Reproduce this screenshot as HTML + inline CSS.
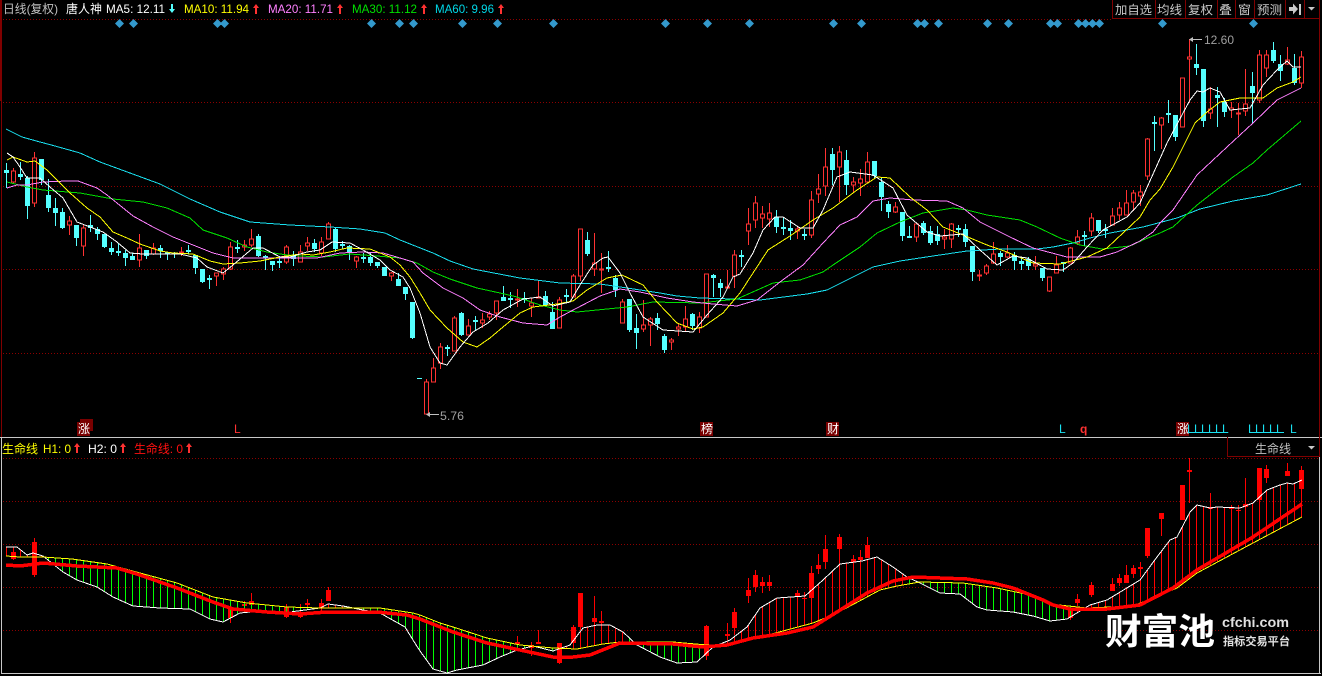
<!DOCTYPE html>
<html lang="zh"><head><meta charset="utf-8"><title>唐人神 日线</title>
<style>html,body{margin:0;padding:0;background:#000;width:1322px;height:676px;overflow:hidden}svg{display:block;position:absolute;left:0;top:0}text{font-family:"Liberation Sans","Noto Sans CJK SC",sans-serif;font-size:12px}</style>
</head><body>
<svg width="1322" height="676" viewBox="0 0 1322 676" xmlns="http://www.w3.org/2000/svg">
<defs>
<pattern id="pg" x="6" y="0" width="7" height="10" patternUnits="userSpaceOnUse"><rect width="1" height="10" fill="#00ff00"/></pattern>
<pattern id="pr" x="6" y="0" width="7" height="10" patternUnits="userSpaceOnUse"><rect width="1" height="10" fill="#ff0000"/></pattern>
<clipPath id="band"><polygon clip-rule="evenodd" points="6,547 17,547 27,555 33,553 43,556 63,572 77,580 97,587 113,597 133,606 160,608 190,609 210,619 223,622 240,613 260,611 290,612 320,608 328,604 343,606 363,610 380,613 405,627 413,640 420,651 433,669 447,673 457,670 483,665 500,657 517,650 533,646 553,651 570,645 583,628 597,625 610,625 623,632 637,645 660,657 677,663 697,662 713,647 730,640 747,627 760,608 777,598 805,596 823,580 840,564 862,561 877,557 893,567 907,577 920,583 940,593 960,594 977,607 987,610 1013,612 1033,616 1050,621 1067,619 1090,605 1107,600 1140,580 1157,557 1170,540 1177,537 1190,512 1197,505 1210,508 1217,507 1240,508 1253,503 1267,490 1280,485 1287,483 1293,484 1302,480 1302,517 1253,543 1197,573 1177,588 1133,606 1087,608 1050,604 1030,595 997,588 963,583 920,582 897,586 880,590 837,613 813,623 753,639 727,645 707,645 673,642 620,642 603,644 577,649 553,648 520,645 487,638 453,627 440,623 420,615 413,613 380,608 320,608 287,607 247,603 213,597 177,583 140,573 107,564 72,559 43,557 20,557 6,556"/></clipPath>
</defs>
<rect width="1322" height="676" fill="#000"/>

<!-- grid -->
<g stroke="#8c0000" stroke-width="1" stroke-dasharray="1 2" shape-rendering="crispEdges" fill="none">
<path d="M3 19.5H1112M3 102.5H1319M3 186.5H1319M3 269.5H1319M3 353.5H1319"/>
<path d="M3 458.5H1319M3 501.5H1319M3 544.5H1319M3 587.5H1319M3 630.5H1319"/>
</g>

<!-- frame -->
<g shape-rendering="crispEdges">
<rect x="0" y="0" width="2" height="101" fill="#800000"/>
<rect x="1" y="101" width="1" height="336" fill="#800000"/>
<rect x="1319" y="0" width="1" height="437" fill="#800000"/>
<rect x="0" y="437" width="1322" height="1" fill="#c8c8c8"/>
<rect x="1" y="437" width="1" height="237" fill="#c8c8c8"/>
<rect x="1" y="673" width="1320" height="1" fill="#c8c8c8"/>
<rect x="1319" y="456" width="1" height="218" fill="#c8c8c8"/>
</g>

<!-- main panel candles -->
<g shape-rendering="crispEdges" fill="none">
<path stroke="#ff3232" d="M13.5 168V183M34.5 152V207M69.5 216V235M83.5 225V256M139.5 234V267M153.5 243V255M181.5 247V256M216.5 273V286M223.5 267V280M230.5 242V270M244.5 240V251M251.5 229V247M286.5 245V264M300.5 245V262M307.5 237V251M321.5 237V256M328.5 222V239M356.5 256V268M391.5 272V281M426.5 379V414M433.5 358V382M440.5 343V369M454.5 316V351M468.5 319V335M482.5 313V328M489.5 311V320M496.5 301V320M517.5 289V307M531.5 298V317M538.5 280V298M559.5 297V328M573.5 274V297M580.5 229V281M594.5 233V276M601.5 253V293M622.5 299V323M643.5 300V332M650.5 317V346M671.5 338V350M678.5 323V336M685.5 306V332M699.5 312V333M706.5 274V317M727.5 270V288M734.5 250V288M748.5 208V245M755.5 196V228M762.5 206V228M769.5 203V227M797.5 227V239M811.5 191V238M818.5 174V203M825.5 148V196M839.5 146V202M853.5 177V193M860.5 169V196M867.5 152V182M895.5 202V213M916.5 224V242M944.5 229V249M951.5 223V248M979.5 270V281M986.5 264V275M993.5 242V264M1007.5 245V258M1035.5 256V270M1049.5 277V292M1056.5 256V273M1070.5 247V263M1077.5 230V245M1091.5 213V236M1112.5 208V225M1119.5 202V220M1126.5 190V215M1133.5 190V211M1140.5 185V206M1147.5 138V180M1161.5 117V149M1182.5 78V127M1189.5 39V103M1210.5 87V119M1231.5 102V118M1238.5 103V135M1245.5 69V116M1259.5 50V103M1266.5 50V77M1287.5 47V65M1301.5 51V88"/>
<path stroke="#ff3232" fill="#000" d="M11.5 171h4V182h-4zM32.5 158h4V203h-4zM67.5 221h4V225h-4zM81.5 228h4V246h-4zM137.5 248h4V260h-4zM151.5 248h4V254h-4zM179.5 252h4V253h-4zM214.5 273h4V276h-4zM221.5 269h4V274h-4zM228.5 247h4V269h-4zM242.5 245h4V247h-4zM249.5 239h4V245h-4zM284.5 247h4V262h-4zM298.5 252h4V262h-4zM305.5 243h4V246h-4zM319.5 242h4V253h-4zM326.5 224h4V239h-4zM354.5 257h4V261h-4zM389.5 273h4V276h-4zM424.5 382h4V414h-4zM431.5 368h4V382h-4zM438.5 347h4V363h-4zM452.5 318h4V351h-4zM466.5 326h4V335h-4zM480.5 320h4V323h-4zM487.5 314h4V317h-4zM494.5 301h4V313h-4zM515.5 299h4V300h-4zM529.5 303h4V306h-4zM536.5 297h4V298h-4zM557.5 300h4V328h-4zM571.5 276h4V297h-4zM578.5 229h4V276h-4zM592.5 263h4V269h-4zM599.5 269h4V270h-4zM620.5 302h4V323h-4zM641.5 325h4V329h-4zM648.5 319h4V325h-4zM669.5 340h4V342h-4zM676.5 327h4V329h-4zM683.5 319h4V327h-4zM697.5 317h4V328h-4zM704.5 274h4V317h-4zM725.5 287h4V288h-4zM732.5 255h4V276h-4zM746.5 224h4V231h-4zM753.5 203h4V220h-4zM760.5 214h4V218h-4zM767.5 213h4V219h-4zM795.5 229h4V231h-4zM809.5 200h4V235h-4zM816.5 189h4V194h-4zM823.5 167h4V186h-4zM837.5 152h4V167h-4zM851.5 182h4V185h-4zM858.5 179h4V183h-4zM865.5 162h4V182h-4zM893.5 207h4V212h-4zM914.5 224h4V237h-4zM942.5 237h4V239h-4zM949.5 224h4V239h-4zM977.5 275h4V276h-4zM984.5 266h4V273h-4zM991.5 254h4V263h-4zM1005.5 253h4V257h-4zM1033.5 264h4V266h-4zM1047.5 277h4V291h-4zM1054.5 265h4V273h-4zM1068.5 248h4V263h-4zM1075.5 237h4V243h-4zM1089.5 218h4V231h-4zM1110.5 216h4V225h-4zM1117.5 208h4V215h-4zM1124.5 203h4V215h-4zM1131.5 193h4V202h-4zM1138.5 192h4V196h-4zM1145.5 139h4V176h-4zM1159.5 118h4V125h-4zM1180.5 78h4V127h-4zM1187.5 57h4V59h-4zM1208.5 109h4V113h-4zM1229.5 108h4V110h-4zM1236.5 113h4V114h-4zM1243.5 104h4V111h-4zM1257.5 55h4V100h-4zM1264.5 55h4V68h-4zM1285.5 60h4V64h-4zM1299.5 57h4V83h-4z"/>
<path stroke="#55ffff" d="M6.5 163V188M20.5 162V180M27.5 176V219M41.5 159V185M48.5 179V212M55.5 198V226M62.5 208V229M76.5 225V246M90.5 215V232M97.5 227V240M104.5 234V248M111.5 242V255M118.5 243V256M125.5 250V266M132.5 253V260M146.5 250V259M160.5 245V258M167.5 252V260M174.5 252V258M188.5 245V254M195.5 255V274M202.5 269V283M209.5 275V289M237.5 240V253M258.5 234V257M265.5 255V270M272.5 261V271M279.5 256V268M293.5 251V266M314.5 239V252M335.5 227V252M342.5 241V249M349.5 245V260M363.5 253V263M370.5 253V266M377.5 262V268M384.5 267V276M398.5 273V286M405.5 287V300M412.5 302V339M447.5 345V356M461.5 312V336M475.5 316V330M503.5 286V301M510.5 292V308M524.5 292V303M545.5 291V305M552.5 302V329M566.5 289V303M587.5 232V256M608.5 251V272M615.5 275V297M629.5 299V332M636.5 314V349M657.5 313V330M664.5 334V353M692.5 313V330M713.5 274V297M720.5 279V297M741.5 250V267M776.5 210V233M783.5 217V235M790.5 220V240M804.5 229V240M832.5 148V185M846.5 150V195M874.5 161V178M881.5 178V211M888.5 201V218M902.5 212V241M909.5 226V238M923.5 221V235M930.5 226V245M937.5 226V245M958.5 225V237M965.5 224V247M972.5 246V281M1000.5 251V266M1014.5 252V270M1021.5 258V270M1028.5 257V270M1042.5 268V281M1063.5 262V272M1084.5 231V246M1098.5 220V233M1105.5 224V238M1154.5 116V151M1168.5 100V123M1175.5 115V141M1196.5 44V75M1203.5 69V127M1217.5 87V127M1224.5 98V117M1252.5 72V123M1273.5 42V63M1280.5 55V81M1294.5 54V85"/>
<path stroke="#55ffff" stroke-width="5" d="M6.5 170V173M20.5 174V177M27.5 178V206M41.5 159V180M48.5 195V208M55.5 208V213M62.5 212V228M76.5 225V238M90.5 225V228M97.5 229V234M104.5 234V247M111.5 248V252M118.5 251V253M125.5 253V258M132.5 256V260M146.5 250V256M160.5 248V251M167.5 252V254M174.5 253V254M188.5 250V252M195.5 255V268M202.5 269V282M209.5 278V280M237.5 247V249M258.5 236V256M265.5 256V258M272.5 261V265M279.5 261V263M293.5 255V259M314.5 243V249M335.5 229V249M342.5 244V246M349.5 246V252M363.5 257V259M370.5 257V263M377.5 262V266M384.5 267V276M398.5 279V286M405.5 287V294M412.5 302V338M419.5 378V379M447.5 347V349M461.5 313V335M475.5 320V322M503.5 297V301M510.5 298V300M524.5 298V300M545.5 296V305M552.5 312V329M566.5 295V297M587.5 240V254M608.5 267V269M615.5 278V290M629.5 299V330M636.5 328V333M657.5 318V324M664.5 336V350M692.5 314V326M713.5 275V278M720.5 283V288M741.5 255V257M776.5 217V227M783.5 227V229M790.5 228V231M804.5 234V236M832.5 154V170M846.5 160V185M874.5 161V176M881.5 182V197M888.5 204V212M902.5 212V236M909.5 236V238M923.5 223V233M930.5 231V243M937.5 234V241M958.5 228V230M965.5 229V242M972.5 246V272M1000.5 253V257M1014.5 255V261M1021.5 261V264M1028.5 259V266M1042.5 268V278M1063.5 262V264M1084.5 235V237M1098.5 220V231M1105.5 229V231M1154.5 122V124M1168.5 113V115M1175.5 115V137M1196.5 64V68M1203.5 69V121M1217.5 95V98M1224.5 102V112M1252.5 86V93M1273.5 50V61M1280.5 64V71M1294.5 68V83"/>
</g>

<!-- MA lines -->
<g fill="none" stroke-width="1" shape-rendering="crispEdges">
<polyline stroke="#19e0f0" points="6,129 22,137 40,142 55,146 80,153 100,162 130,173 160,184 190,199 220,212 250,222 290,225 330,227 360,229 385,233 400,240 433,253 450,261 473,269 520,278 560,283 600,284 627,288 660,293 677,296 700,298 733,299 760,300 807,294 827,290 847,280 873,267 900,261 933,256 967,251 1000,249 1037,249 1053,247 1073,243 1090,238 1110,233 1143,227 1177,218 1200,209 1233,201 1267,195 1301,184"/>
<polyline stroke="#00e000" points="7,182 27,187 43,190 80,193 113,199 143,202 167,208 190,218 203,230 227,238 247,247 267,252 287,255 300,256 323,257 350,254 377,256 400,258 417,263 433,272 450,279 477,288 500,293 517,297 540,305 560,310 577,312 607,309 627,307 653,302 700,303 737,299 773,283 800,280 823,272 833,265 860,247 877,233 900,222 923,213 953,208 967,210 987,215 1020,220 1037,227 1060,238 1080,245 1102,249 1130,246 1143,240 1160,233 1173,227 1197,205 1233,177 1253,163 1267,150 1301,121"/>
<polyline stroke="#ff80ff" points="7,188 17,185 27,185 43,182 67,181 78,181 97,188 107,195 117,203 133,216 153,227 173,237 193,245 213,253 233,258 260,258 300,258 317,258 340,253 363,252 383,253 400,258 413,262 423,273 443,288 463,298 480,310 500,317 523,323 547,325 560,317 577,308 600,296 620,289 640,292 667,298 693,302 713,304 737,306 757,300 780,282 803,265 823,243 840,225 857,217 873,201 890,198 913,200 947,201 963,208 980,222 1010,237 1033,248 1067,257 1100,257 1117,252 1140,241 1153,232 1160,223 1173,210 1197,175 1227,147 1253,123 1277,100 1301,88"/>
<polyline stroke="#ffff00" points="7,160 13,157 27,162 35,161 47,170 57,180 70,193 87,208 100,217 113,232 127,238 140,244 160,251 173,253 193,254 210,261 223,264 240,263 260,261 280,257 300,254 313,255 330,252 347,248 370,249 390,257 400,265 410,277 420,293 430,310 447,328 463,342 477,347 490,338 503,327 520,313 533,307 557,304 573,301 587,290 607,278 622,275 643,285 657,302 677,323 693,329 703,327 723,313 740,293 768,250 790,236 813,220 833,208 857,190 877,177 890,178 910,197 927,210 943,227 963,235 987,245 1007,252 1033,263 1060,264 1087,257 1107,248 1140,217 1150,200 1160,189 1173,167 1195,123 1207,112 1220,102 1240,98 1263,98 1277,88 1293,82 1301,77"/>
<polyline stroke="#ffffff" points="7,153 13,157 20,167 27,178 40,178 50,187 63,198 77,222 90,227 103,232 117,242 130,253 143,254 180,254 197,258 207,267 223,273 233,265 253,248 263,248 280,257 290,257 307,252 320,250 332,242 350,243 363,250 380,260 390,270 403,277 410,288 420,313 430,347 440,363 447,365 460,347 473,332 488,323 503,310 523,299 540,297 553,306 570,302 580,285 593,265 603,258 608,257 620,273 630,293 643,317 663,330 693,332 707,315 723,297 733,277 740,274 753,253 763,230 775,217 783,217 800,228 813,228 823,210 837,177 850,172 873,175 893,188 907,215 927,232 940,236 963,234 980,250 997,265 1013,256 1027,258 1047,269 1063,270 1073,263 1087,247 1103,230 1127,217 1140,203 1167,143 1190,100 1197,91 1203,92 1210,88 1220,92 1230,110 1250,108 1263,85 1277,70 1287,61 1293,67 1301,67"/>
</g>

<!-- extremes -->
<g fill="none" stroke="#c0c0c0" stroke-width="1" shape-rendering="crispEdges"><path d="M427 414.5H439M1190 39.5H1202"/></g>
<path fill="#c0c0c0" d="M426 414.5l4-2.5v5zM1189 39.5l4-2.5v5z"/>
<text x="440" y="420" fill="#a0a0a0" textLength="24" lengthAdjust="spacingAndGlyphs">5.76</text>
<text x="1204" y="44" fill="#a0a0a0" textLength="30" lengthAdjust="spacingAndGlyphs">12.60</text>

<!-- diamonds -->
<path fill="#3399cc" transform="translate(1 0.5)" d="M118.5 18.500l4.500 4.500-4.500 4.500-4.500-4.500zM132.500 18.500l4.500 4.500-4.500 4.500-4.500-4.500zM216.500 18.500l4.500 4.500-4.500 4.500-4.500-4.500zM223.500 18.500l4.500 4.500-4.500 4.500-4.500-4.500zM370.500 18.500l4.500 4.500-4.500 4.500-4.500-4.500zM398.500 18.500l4.500 4.500-4.500 4.500-4.500-4.500zM412.500 18.500l4.500 4.500-4.500 4.500-4.500-4.500zM461.500 18.500l4.500 4.500-4.500 4.500-4.500-4.500zM496.500 18.500l4.500 4.500-4.500 4.500-4.500-4.500zM552.500 18.500l4.500 4.500-4.500 4.500-4.500-4.500zM664.500 18.500l4.500 4.500-4.500 4.500-4.500-4.500zM706.500 18.500l4.500 4.500-4.500 4.500-4.500-4.500zM748.500 18.500l4.500 4.500-4.500 4.500-4.500-4.500zM832.500 18.500l4.500 4.500-4.500 4.500-4.500-4.500zM860.500 18.500l4.500 4.500-4.500 4.500-4.500-4.500zM916.500 18.500l4.500 4.500-4.500 4.500-4.500-4.500zM923.500 18.500l4.500 4.500-4.500 4.500-4.500-4.500zM937.500 18.500l4.500 4.500-4.500 4.500-4.500-4.500zM986.500 18.500l4.500 4.500-4.500 4.500-4.500-4.500zM1007.500 18.500l4.500 4.500-4.500 4.500-4.500-4.500zM1049.500 18.500l4.500 4.500-4.500 4.500-4.500-4.500zM1056.500 18.500l4.500 4.500-4.500 4.500-4.500-4.500zM1077.500 18.500l4.500 4.500-4.500 4.500-4.500-4.500zM1084.500 18.500l4.500 4.500-4.500 4.500-4.500-4.500zM1091.500 18.500l4.500 4.500-4.500 4.500-4.500-4.500zM1098.500 18.500l4.500 4.500-4.500 4.500-4.500-4.500zM1161.500 18.500l4.500 4.500-4.500 4.500-4.500-4.500zM1252.500 18.500l4.500 4.500-4.500 4.500-4.500-4.500z"/>

<!-- header -->
<text x="3" y="13" fill="#c0c0c0" textLength="55" lengthAdjust="spacingAndGlyphs">日线(复权)</text>
<text x="66" y="13" fill="#ffffff" textLength="36" lengthAdjust="spacingAndGlyphs">唐人神</text>
<text x="106" y="13" fill="#ffffff" textLength="59" lengthAdjust="spacingAndGlyphs">MA5: 12.11</text>
<text x="184" y="13" fill="#ffff00" textLength="65" lengthAdjust="spacingAndGlyphs">MA10: 11.94</text>
<text x="268" y="13" fill="#ff80ff" textLength="65" lengthAdjust="spacingAndGlyphs">MA20: 11.71</text>
<text x="352" y="13" fill="#00e000" textLength="65" lengthAdjust="spacingAndGlyphs">MA30: 11.12</text>
<text x="435" y="13" fill="#00d8e8" textLength="59" lengthAdjust="spacingAndGlyphs">MA60: 9.96</text>
<path fill="#55ffff" d="M172 13l-3-4h2V4h2v5h2z"/>
<path fill="#ff3232" d="M256 4l3 4h-2v6h-2V8h-2zM340 4l3 4h-2v6h-2V8h-2zM424 4l3 4h-2v6h-2V8h-2zM501 4l3 4h-2v6h-2V8h-2z"/>

<!-- toolbar -->
<path fill="none" stroke="#800000" stroke-width="1" shape-rendering="crispEdges" d="M1112.500 0V18.500H1319.500M1155.500 0V18M1185.500 0V18M1217.500 0V18M1235.500 0V18M1254.500 0V18M1285.500 0V18M1304.500 0V18"/>
<g fill="#c8c8c8">
<text x="1115" y="14" textLength="37" lengthAdjust="spacingAndGlyphs">加自选</text>
<text x="1157" y="14" textLength="25" lengthAdjust="spacingAndGlyphs">均线</text>
<text x="1188" y="14" textLength="25" lengthAdjust="spacingAndGlyphs">复权</text>
<text x="1219" y="14" textLength="13" lengthAdjust="spacingAndGlyphs">叠</text>
<text x="1238" y="14" textLength="13" lengthAdjust="spacingAndGlyphs">窗</text>
<text x="1257" y="14" textLength="25" lengthAdjust="spacingAndGlyphs">预测</text>
<path d="M1289 7h4V3.500l5 5.500-5 5.500V11h-4z"/>
<rect x="1299" y="4" width="2" height="11"/>
<path d="M1308 7h7l-3.500 3.500z"/>
</g>

<!-- tags -->
<rect x="80" y="419" width="13" height="12" fill="#7a0000"/><rect x="77" y="422" width="13" height="14" fill="#7a0000"/>
<rect x="700" y="422" width="13" height="14" fill="#7a0000"/>
<rect x="826" y="422" width="13" height="14" fill="#7a0000"/>
<rect x="1176" y="422" width="13" height="14" fill="#7a0000"/>
<text x="78" y="433" fill="#fff">涨</text>
<text x="701" y="433" fill="#fff">榜</text>
<text x="827" y="433" fill="#fff">财</text>
<text x="1177" y="433" fill="#fff">涨</text>
<text x="234" y="433" fill="#ff3232">L</text>
<text x="1059" y="433" fill="#19e0f0">L</text>
<text x="1080" y="433" fill="#ff3232" font-weight="bold">q</text>
<g fill="#19e0f0">
<text x="1187" y="433">L</text><text x="1194" y="433">L</text><text x="1201" y="433">L</text><text x="1208" y="433">L</text><text x="1215" y="433">L</text><text x="1222" y="433">L</text>
<text x="1248" y="433">L</text><text x="1255" y="433">L</text><text x="1262" y="433">L</text><text x="1269" y="433">L</text><text x="1276" y="433">L</text>
<text x="1290" y="433">L</text>
<rect x="1188" y="432" width="40" height="1"/>
<rect x="1249" y="432" width="35" height="1"/>
</g>

<!-- lower panel header -->
<text x="2" y="453" fill="#ffff00" textLength="36" lengthAdjust="spacingAndGlyphs">生命线</text>
<text x="43" y="453" fill="#ffff00" textLength="28" lengthAdjust="spacingAndGlyphs">H1: 0</text>
<text x="88" y="453" fill="#ffffff" textLength="29" lengthAdjust="spacingAndGlyphs">H2: 0</text>
<text x="134" y="453" fill="#ff1010" textLength="49" lengthAdjust="spacingAndGlyphs">生命线: 0</text>
<path fill="#ff3232" d="M77 443l3 4h-2v6h-2v-6h-2zM123 443l3 4h-2v6h-2v-6h-2zM189 443l3 4h-2v6h-2v-6h-2z"/>
<path fill="none" stroke="#800000" stroke-width="1" shape-rendering="crispEdges" d="M1227.500 437V456.500H1319.500V437"/>
<text x="1255" y="453" fill="#c0c0c0" textLength="36" lengthAdjust="spacingAndGlyphs">生命线</text>
<path fill="#c8c8c8" d="M1308 446h7l-3.500 3.500z"/>

<!-- lower candles -->
<g shape-rendering="crispEdges" fill="none" stroke="#ff0000">
<path d="M13.500 550V560M34.500 538V577M230.500 602V623M244.500 601V609M251.500 593V606M286.500 604V618M300.500 604V618M307.500 599V609M321.500 599V612M328.500 587V601M517.500 636V649M531.500 642V656M538.500 630V644M559.500 643V664M573.500 625V643M580.500 593V630M594.500 596V627M601.500 611V638M706.500 625V660M727.500 623V640M734.500 608V635M748.500 578V603M755.500 570V592M762.500 577V593M769.500 575V591M797.500 590V600M804.500 592V605M811.500 566V600M818.500 554V574M825.500 535V569M839.500 534V570M853.500 555V567M860.500 550V570M867.500 537V558M1070.500 606V620M1077.500 594V606M1091.500 582V597M1112.500 578V591M1119.500 574V586M1126.500 565V583M1133.500 565V578M1140.500 562V577M1147.500 528V558M1161.500 513V536M1182.500 485V520M1189.500 458V503M1210.500 493V512M1231.500 505V512M1238.500 505V525M1245.500 478V512M1259.500 468V502M1266.500 465V483M1287.500 463V476M1301.500 466V516"/>
<path stroke-width="5" d="M13.500 552V559M34.500 542V575M230.500 607V618M244.500 604V606M251.500 601V605M286.500 607V617M300.500 613V617M307.500 603V605M321.500 603V608M328.500 590V601M517.500 642V644M531.500 645V648M538.500 642V644M559.500 643V663M573.500 627V643M580.500 593V627M594.500 618V622M601.500 621V623M706.500 626V656M727.500 634V636M734.500 612V628M748.500 590V596M755.500 575V587M762.500 582V586M769.500 582V586M797.500 593V596M804.500 598V599M811.500 573V598M818.500 565V569M825.500 549V562M839.500 537V549M853.500 559V562M860.500 557V560M867.500 545V558M1070.500 608V618M1077.500 599V603M1091.500 585V595M1112.500 584V591M1119.500 578V583M1126.500 575V583M1133.500 568V574M1140.500 567V569M1147.500 528V556M1161.500 513V519M1182.500 485V520M1189.500 470V472M1210.500 507V509M1231.500 508V509M1238.500 510V511M1245.500 504V507M1259.500 468V500M1266.500 469V478M1287.500 471V476M1301.500 470V489"/>
</g>

<!-- histogram sticks between lines -->
<g clip-path="url(#band)" shape-rendering="crispEdges">
<rect x="4" y="470" width="44" height="205" fill="url(#pr)"/>
<rect x="48" y="470" width="271" height="205" fill="url(#pg)"/>
<rect x="319" y="470" width="28" height="205" fill="url(#pr)"/>
<rect x="347" y="470" width="218" height="205" fill="url(#pg)"/>
<rect x="565" y="470" width="60" height="205" fill="url(#pr)"/>
<rect x="625" y="470" width="80" height="205" fill="url(#pg)"/>
<rect x="705" y="470" width="200" height="205" fill="url(#pr)"/>
<rect x="905" y="470" width="170" height="205" fill="url(#pg)"/>
<rect x="1075" y="470" width="235" height="205" fill="url(#pr)"/>
</g>

<!-- lower lines -->
<g fill="none" shape-rendering="crispEdges">
<polyline stroke="#ffffff" points="6,547 17,547 27,555 33,553 43,556 63,572 77,580 97,587 113,597 133,606 160,608 190,609 210,619 223,622 240,613 260,611 290,612 320,608 328,604 343,606 363,610 380,613 405,627 413,640 420,651 433,669 447,673 457,670 483,665 500,657 517,650 533,646 553,651 570,645 583,628 597,625 610,625 623,632 637,645 660,657 677,663 697,662 713,647 730,640 747,627 760,608 777,598 805,596 823,580 840,564 862,561 877,557 893,567 907,577 920,583 940,593 960,594 977,607 987,610 1013,612 1033,616 1050,621 1067,619 1090,605 1107,600 1140,580 1157,557 1170,540 1177,537 1190,512 1197,505 1210,508 1217,507 1240,508 1253,503 1267,490 1280,485 1287,483 1293,484 1302,480"/>
<polyline stroke="#ffff00" points="6,556 20,557 43,557 72,559 107,564 140,573 177,583 213,597 247,603 287,607 320,608 380,608 413,613 420,615 440,623 453,627 487,638 520,645 553,648 577,649 603,644 620,642 673,642 707,645 727,645 753,639 813,623 837,613 880,590 897,586 920,582 963,583 997,588 1030,595 1050,604 1087,608 1133,606 1177,588 1197,573 1253,543 1302,517"/>
<polyline stroke="#ff0000" stroke-width="3.500" points="6,565 20,566 43,563 77,566 117,568 140,575 177,588 213,602 233,609 267,612 300,614 327,612 377,612 407,615 420,619 453,632 487,643 520,650 553,657 573,657 590,655 620,643 673,644 703,647 727,645 753,638 787,633 813,627 837,612 867,593 893,581 913,577 940,578 967,579 993,583 1013,588 1043,600 1053,605 1070,609 1107,609 1140,605 1173,588 1197,570 1253,537 1302,504"/>
</g>

<!-- watermark -->
<text x="1105" y="644" fill="#ffffff" font-weight="bold" style="font-size:36px" textLength="110" lengthAdjust="spacingAndGlyphs">财富池</text>
<text x="1222" y="627" fill="#e0e0e0" font-weight="bold" style="font-size:14px" textLength="67" lengthAdjust="spacingAndGlyphs">cfchi.com</text>
<text x="1223" y="645" fill="#e0e0e0" font-weight="bold" style="font-size:11px" textLength="67" lengthAdjust="spacingAndGlyphs">指标交易平台</text>
</svg>
</body></html>
